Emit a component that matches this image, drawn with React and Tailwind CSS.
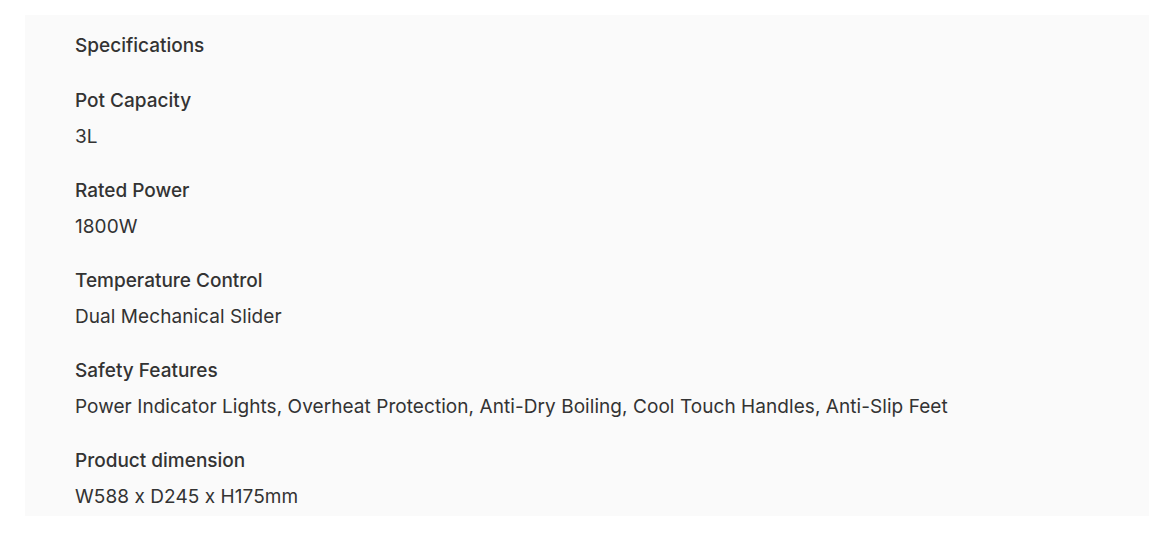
import React from 'react';

const specs = [
    { label: 'Pot Capacity', value: '3L' },
    { label: 'Rated Power', value: '1800W' },
    { label: 'Temperature Control', value: 'Dual Mechanical Slider' },
    { label: 'Safety Features', value: 'Power Indicator Lights, Overheat Protection, Anti-Dry Boiling, Cool Touch Handles, Anti-Slip Feet' },
    { label: 'Product dimension', value: 'W588 x D245 x H175mm' },
];

const App = () => {
    return (
        <div className="min-h-screen bg-white pt-[15px] pl-[25px] pr-[24px] font-['Inter',sans-serif] text-[#333333]">
            <div className="bg-[#fafafa] pl-[50px] pt-[19px] pb-[7px]">
                <h2 className="text-[19px] leading-6 font-medium">Specifications</h2>
                <div className="mt-[31px] flex flex-col gap-[30px]">
                    {specs.map((spec) => (
                        <div key={spec.label} className="flex flex-col gap-3">
                            <div className="text-[19px] leading-6 font-medium">{spec.label}</div>
                            <div className="text-[19px] leading-6 tracking-[0.06px]">{spec.value}</div>
                        </div>
                    ))}
                </div>
            </div>
        </div>
    );
};

export default App;
